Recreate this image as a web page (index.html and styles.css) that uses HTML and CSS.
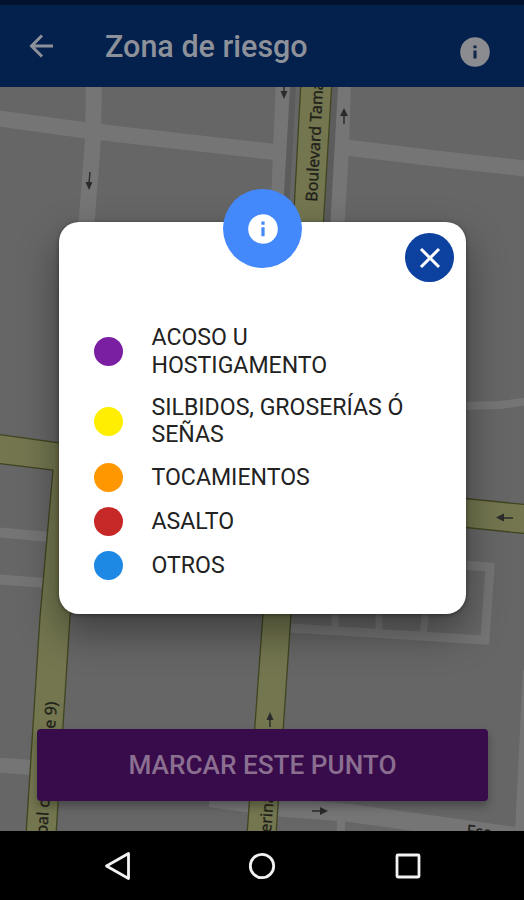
FILE: index.html
```html
<!DOCTYPE html>
<html lang="es">
<head>
    <meta charset="UTF-8">
    <title>Zona de riesgo</title>
    <link rel="stylesheet" href="styles.css">
</head>
<body>

    <header class="barra">
        <svg class="volver" viewBox="0 0 24 24" fill="none" stroke="#8d919a" stroke-width="3">
            <path d="M24 12H3M13 1.500L2.500 12l10.500 10.500"/>
        </svg>
        <h1>Zona de riesgo</h1>
        <svg class="info" viewBox="0 0 30 30">
            <circle cx="15" cy="15" r="14.8" fill="#8b8c90"/>
            <path d="M13.4 8.500h3.200v2.700h-3.200zM13.400 13.500h3.200v8h-3.200z" fill="#14284d"/>
        </svg>
    </header>

    <main class="mapa">
        <svg class="calles" viewBox="0 87 524 744">
            <!-- calles -->
            <g fill="none" stroke="#757575" stroke-width="16">
                <path d="M-5 118L90 131L275 152"/>
                <path d="M94 80L93 140L86 230"/>
                <path d="M284 80L281 150L278 230"/>
                <path d="M343 80L341 150L336 230"/>
                <path d="M342 147L440 159L530 169"/>
                <path d="M-5 532L50 537" stroke-width="10"/>
                <path d="M-5 579L46 583" stroke-width="10"/>
                <path d="M-5 765L40 768" stroke-width="15"/>
                <path d="M460 406L500 405L530 401" stroke-width="8"/>
                <path d="M460 565L490 567L485 640L290 628" stroke-width="9"/>
                <path d="M335 610V630M379 610V632M426 610L423 635" stroke-width="7"/>
                <path d="M210 798L275 807L350 813L530 838" stroke-width="18"/>
                <path d="M341 812V840" stroke-width="8"/>
                <path d="M529 670L521 832" stroke-width="12"/>
            </g>
            <path d="M293 87L285 230M335 87L327 230" stroke="#5c5c5c" stroke-width="6"/>
            <!-- avenidas -->
            <g fill="#73764f" stroke="#414420" stroke-width="1.3">
                <path d="M301 80L293 230L323 230L332 80z"/>
                <path d="M460 498L530 505V534L460 527z"/>
                <path d="M-5 434L75 445L74 590L70 617L56 835L26 835L40 617L53 470L-5 463z"/>
                <path d="M264 600L247 835L276 835L292 600z"/>
            </g>
            <!-- sentido -->
            <g fill="none" stroke="#2b2b2b" stroke-width="1.500">
                <path d="M90 172L89 184M284 85V93M344 124V113M270 727V718M513 518H502M312 811H322"/>
            </g>
            <g fill="#2b2b2b">
                <path d="M85.500 182h7L89 190zM280.500 91h7L284 99zM340 116h8L344 108zM266.500 720h7L270 712zM504 513.500v8L496 517.500zM320 807v8L328 811z"/>
            </g>
            <g class="rotulo">
                <text transform="translate(317 202) rotate(-87)">Boulevard Tama</text>
                <text transform="translate(47 835) rotate(-86)">bal c</text>
                <text transform="translate(55 729) rotate(-86)">e 9)</text>
                <text transform="translate(271 833) rotate(-86)">erina</text>
                <text transform="translate(466 836) rotate(6)">Fco</text>
            </g>
        </svg>
        <button class="marcar" type="button">MARCAR ESTE PUNTO</button>
    </main>

    <nav class="sistema">
        <svg viewBox="0 0 30 30"><path d="M27.500 2.500v25L5.500 15z"/></svg>
        <svg viewBox="0 0 30 30"><circle cx="15" cy="15" r="11.700"/></svg>
        <svg viewBox="0 0 30 30"><rect x="4" y="4" width="22" height="22" rx="1"/></svg>
    </nav>

    <section class="dialogo">
        <div class="insignia">
            <svg viewBox="0 0 30 30">
                <circle cx="15" cy="15" r="14.800" fill="#fff"/>
                <path d="M13.400 7.600h3.200v3.100h-3.200zM13.400 13.200h3.200v9h-3.200z" fill="#4489fb"/>
            </svg>
        </div>
        <button class="cerrar" type="button" aria-label="Cerrar">
            <svg viewBox="0 0 22 22"><path d="M2 2l18 18M20 2L2 20"/></svg>
        </button>
        <ul class="leyenda">
            <li><span class="punto acoso"></span><span>ACOSO U<br>HOSTIGAMENTO</span></li>
            <li><span class="punto silbidos"></span><span>SILBIDOS, GROSERÍAS Ó<br>SEÑAS</span></li>
            <li><span class="punto tocamientos"></span><span>TOCAMIENTOS</span></li>
            <li><span class="punto asalto"></span><span>ASALTO</span></li>
            <li><span class="punto otros"></span><span>OTROS</span></li>
        </ul>
    </section>

</body>
</html>
```

FILE: styles.css
```css
* {
    box-sizing: border-box;
}

body {
    font-family: Roboto, Arial, sans-serif;
    background-color: #666;
    margin: 0;
    height: 900px;
    display: flex;
    flex-direction: column;
    position: relative;
    overflow: hidden;
}

.barra {
    height: 87px;
    border-top: 5px solid #03122e;
    background-color: #04204c;
    display: flex;
    align-items: center;
    padding: 0 34px 0 29px;
}

.volver {
    width: 24px;
    height: 24px;
}

h1 {
    margin: 0 auto 0 52px;
    font-size: 30.5px;
    font-weight: 500;
    color: #8d919a;
}

.info {
    width: 30px;
    height: 30px;
    margin-top: 12px;
}

.mapa {
    flex: 1;
    position: relative;
    display: flex;
    align-items: flex-end;
    padding: 0 36px 30px 37px;
}

.calles {
    position: absolute;
    top: 0;
    left: 0;
    width: 524px;
    height: 744px;
}

.rotulo {
    font-family: "Noto Sans", sans-serif;
    font-size: 16px;
    fill: #1f1f1a;
    stroke: #1f1f1a;
    stroke-width: 0.3;
}

.marcar {
    position: relative;
    width: 100%;
    height: 72px;
    border: none;
    border-radius: 4px;
    background-color: #380b4b;
    color: #8a6f90;
    font-family: inherit;
    font-size: 26.2px;
    font-weight: 500;
    box-shadow: 0 5px 10px rgba(0, 0, 0, 0.3);
}

.sistema {
    height: 69px;
    background-color: #000;
    display: flex;
    justify-content: center;
    align-items: center;
    gap: 116px;
}

.sistema svg {
    width: 30px;
    height: 30px;
    fill: none;
    stroke: #f2f2f2;
    stroke-width: 2.8;
    stroke-linejoin: round;
}

.dialogo {
    position: absolute;
    top: 222px;
    left: 59px;
    width: 407px;
    height: 392px;
    padding: 102px 20px 0 34.5px;
    border-radius: 20px;
    background-color: #fff;
    box-shadow: 0 18px 40px rgba(0, 0, 0, 0.4), 0 1px 4px rgba(0, 0, 0, 0.4);
}

.insignia {
    position: absolute;
    top: -33px;
    left: 164px;
    width: 79px;
    height: 79px;
    border-radius: 50%;
    background-color: #4489fb;
    display: flex;
    justify-content: center;
    align-items: center;
}

.insignia svg {
    width: 30px;
    height: 30px;
}

.cerrar {
    position: absolute;
    top: 11px;
    right: 12px;
    width: 49px;
    height: 49px;
    padding: 0;
    border: none;
    border-radius: 50%;
    background-color: #0c41a0;
    display: flex;
    justify-content: center;
    align-items: center;
}

.cerrar svg {
    width: 22px;
    height: 22px;
    fill: none;
    stroke: #fff;
    stroke-width: 3;
}

.leyenda {
    list-style: none;
    margin: 0;
    padding: 0;
    display: flex;
    flex-direction: column;
    gap: 14.7px;
    font-size: 23.1px;
    line-height: 27.5px;
    color: #222;
}

.leyenda li {
    display: flex;
    align-items: center;
    gap: 29px;
    white-space: nowrap;
}

.punto {
    width: 29px;
    height: 29px;
    border-radius: 50%;
}

.acoso {
    background-color: #7b1fa2;
}

.silbidos {
    background-color: #ffee00;
}

.tocamientos {
    background-color: #ff9800;
}

.asalto {
    background-color: #c62828;
}

.otros {
    background-color: #1e88e5;
}
```
